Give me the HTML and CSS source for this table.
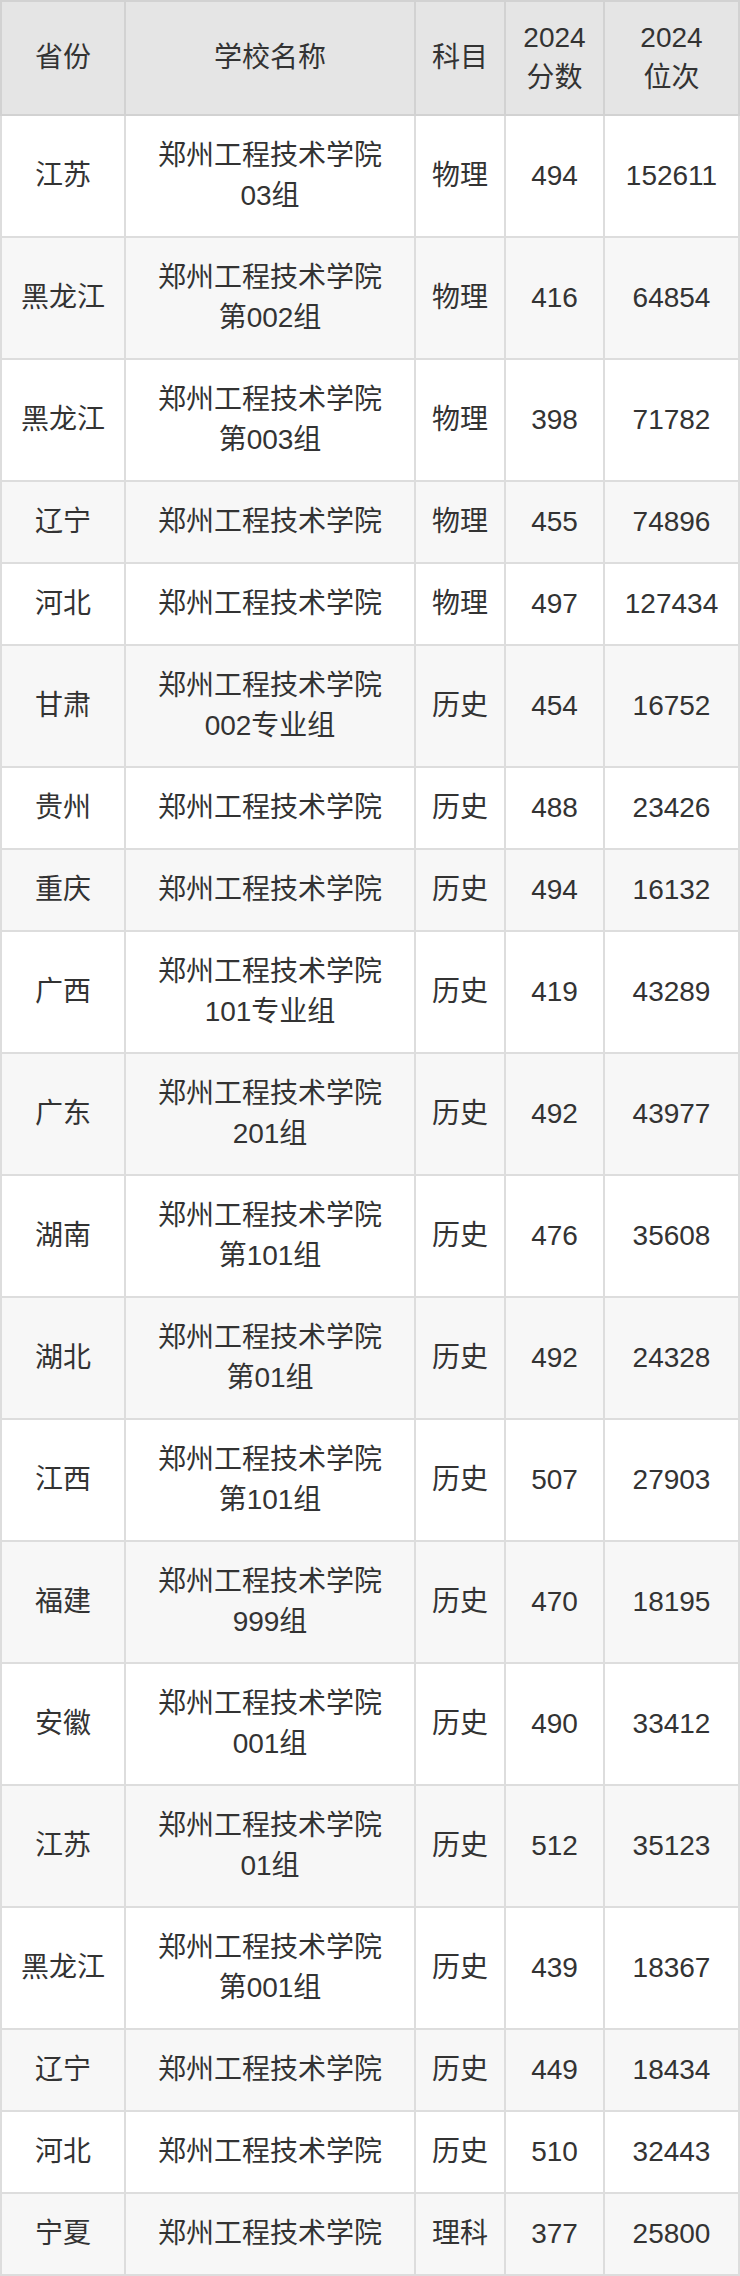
FILE: index.html
```html
<!DOCTYPE html>
<html lang="zh-CN">
<head>
<meta charset="utf-8">
<title>郑州工程技术学院 2024 分数</title>
<link rel="stylesheet" href="styles.css">
</head>
<body>
<table class="score-table">
  <colgroup>
    <col class="c-prov"><col class="c-school"><col class="c-subj"><col class="c-score"><col class="c-rank">
  </colgroup>
  <thead>
    <tr><th>省份</th><th>学校名称</th><th>科目</th><th>2024<br>分数</th><th>2024<br>位次</th></tr>
  </thead>
  <tbody>
    <tr><td>江苏</td><td>郑州工程技术学院<br>03组</td><td>物理</td><td>494</td><td>152611</td></tr>
    <tr><td>黑龙江</td><td>郑州工程技术学院<br>第002组</td><td>物理</td><td>416</td><td>64854</td></tr>
    <tr><td>黑龙江</td><td>郑州工程技术学院<br>第003组</td><td>物理</td><td>398</td><td>71782</td></tr>
    <tr><td>辽宁</td><td>郑州工程技术学院</td><td>物理</td><td>455</td><td>74896</td></tr>
    <tr><td>河北</td><td>郑州工程技术学院</td><td>物理</td><td>497</td><td>127434</td></tr>
    <tr><td>甘肃</td><td>郑州工程技术学院<br>002专业组</td><td>历史</td><td>454</td><td>16752</td></tr>
    <tr><td>贵州</td><td>郑州工程技术学院</td><td>历史</td><td>488</td><td>23426</td></tr>
    <tr><td>重庆</td><td>郑州工程技术学院</td><td>历史</td><td>494</td><td>16132</td></tr>
    <tr><td>广西</td><td>郑州工程技术学院<br>101专业组</td><td>历史</td><td>419</td><td>43289</td></tr>
    <tr><td>广东</td><td>郑州工程技术学院<br>201组</td><td>历史</td><td>492</td><td>43977</td></tr>
    <tr><td>湖南</td><td>郑州工程技术学院<br>第101组</td><td>历史</td><td>476</td><td>35608</td></tr>
    <tr><td>湖北</td><td>郑州工程技术学院<br>第01组</td><td>历史</td><td>492</td><td>24328</td></tr>
    <tr><td>江西</td><td>郑州工程技术学院<br>第101组</td><td>历史</td><td>507</td><td>27903</td></tr>
    <tr><td>福建</td><td>郑州工程技术学院<br>999组</td><td>历史</td><td>470</td><td>18195</td></tr>
    <tr><td>安徽</td><td>郑州工程技术学院<br>001组</td><td>历史</td><td>490</td><td>33412</td></tr>
    <tr><td>江苏</td><td>郑州工程技术学院<br>01组</td><td>历史</td><td>512</td><td>35123</td></tr>
    <tr><td>黑龙江</td><td>郑州工程技术学院<br>第001组</td><td>历史</td><td>439</td><td>18367</td></tr>
    <tr><td>辽宁</td><td>郑州工程技术学院</td><td>历史</td><td>449</td><td>18434</td></tr>
    <tr><td>河北</td><td>郑州工程技术学院</td><td>历史</td><td>510</td><td>32443</td></tr>
    <tr><td>宁夏</td><td>郑州工程技术学院</td><td>理科</td><td>377</td><td>25800</td></tr>
  </tbody>
</table>
</body>
</html>
```

FILE: styles.css
```css
html, body {
  margin: 0;
  padding: 0;
  background: #ffffff;
}

.score-table {
  width: 740px;
  table-layout: fixed;
  border-collapse: collapse;
  font-family: "Liberation Sans", "Noto Sans CJK SC", sans-serif;
  font-size: 28px;
  line-height: 40px;
  color: #333333;
  border: 2px solid #dddddd;
}

.c-prov { width: 124px; }
.c-school { width: 290px; }
.c-subj { width: 90px; }
.c-score { width: 99px; }
.c-rank { width: 135px; }

.score-table th,
.score-table td {
  border: 2px solid #dddddd;
  text-align: center;
  vertical-align: middle;
  padding: 20px 0;
  white-space: nowrap;
}

.score-table th {
  font-weight: normal;
  background: #e5e5e5;
  border-color: #d2d2d2;
  padding: 16px 0;
}

.score-table thead tr {
  border-bottom: 2px solid #cccccc;
}

.score-table tbody tr:nth-child(even) td {
  background: #f7f7f7;
}
```
